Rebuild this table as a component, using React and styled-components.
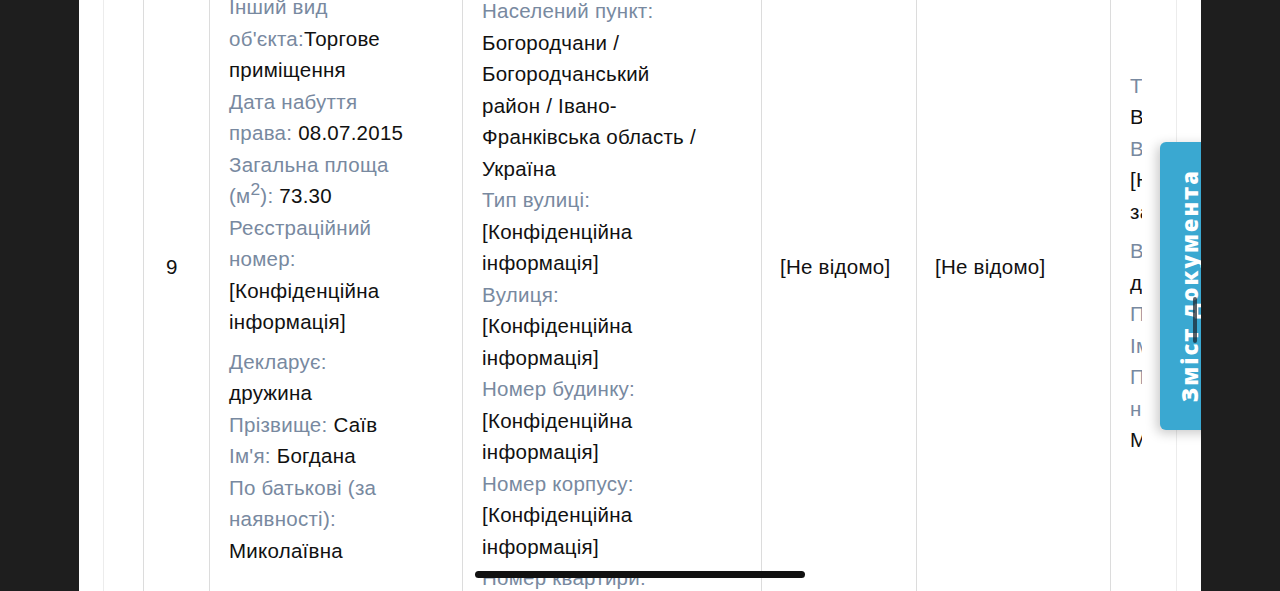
import React from 'react';
import styled, { createGlobalStyle } from 'styled-components';

const Global = createGlobalStyle`
  html, body { margin: 0; padding: 0; background: #1e1e1e; }
  body { font-family: "Liberation Sans", Arial, sans-serif; }
`;

const Screen = styled.div`
  display: flex;
  height: 591px;
  overflow: hidden;
  background: #1e1e1e;
`;

const Page = styled.main`
  position: relative;
  flex: 1;
  margin: 0 79px;
  padding: 0 24px;
  background: #fff;
  overflow: hidden;
`;

const Card = styled.section`
  margin-top: -141px;
  border: 1px solid #ececec;
  padding: 0 34px 0 39px;
`;

const TableClip = styled.div`
  overflow: hidden;
`;

const Table = styled.table`
  border-collapse: separate;
  border-spacing: 0;
  table-layout: fixed;
  width: 1268px;
  border-top: 1px solid #dcdcdc;
  font-size: 20.5px;
  line-height: 31.5px;
  letter-spacing: 0.25px;
  color: #111;
`;

const Col = styled.col`
  width: ${(p) => p.$w}px;
`;

const Cell = styled.td`
  vertical-align: middle;
  padding: 8px 18px 8px ${(p) => p.$pl ?? 18}px;
  border-right: 1px solid #dcdcdc;
  border-bottom: 1px solid #dcdcdc;
  &:first-child {
    border-left: 1px solid #dcdcdc;
  }
`;

const Block = styled.div`
  max-width: ${(p) => p.$w}px;
  margin-bottom: 8px;
`;

const Line = styled.div``;

const Label = styled.span`
  color: #7889a0;
  display: ${(p) => (p.$block ? 'block' : 'inline')};
`;

const Sup = styled.sup`
  font-size: 0.85em;
  line-height: 0;
  vertical-align: 0.45em;
`;

const Field = ({ label, children, stacked, tight }) => (
  <Line>
    <Label $block={stacked}>{label}</Label>
    {!stacked && !tight ? ' ' : null}
    {children}
  </Line>
);

const Tab = styled.div`
  position: absolute;
  top: 142px;
  right: -17px;
  width: 58px;
  height: 288px;
  display: flex;
  align-items: center;
  justify-content: center;
  background: #3aa8d1;
  border-radius: 6px 0 0 6px;
  box-shadow: -3px 3px 12px rgba(0, 0, 0, 0.22);
`;

const TabLabel = styled.span`
  writing-mode: vertical-rl;
  transform: rotate(180deg);
  color: #fff;
  font-family: "Open Sans", "DejaVu Sans", sans-serif;
  font-weight: 800;
  font-size: 22px;
  letter-spacing: 2px;
  line-height: 1;
`;

const HScrollIndicator = styled.div`
  position: absolute;
  left: 396px;
  top: 571px;
  width: 330px;
  height: 7px;
  border-radius: 4px;
  background: #111;
`;

const VScrollIndicator = styled.div`
  position: absolute;
  left: 1114px;
  top: 297px;
  width: 4px;
  height: 46px;
  border-radius: 2px;
  background: rgba(25, 35, 45, 0.72);
`;

const CONF = '[Конфіденційна інформація]';

export default function App() {
  return (
    <>
      <Global />
      <Screen>
        <Page>
          <Card>
            <TableClip>
              <Table>
                <colgroup>
                  <Col $w={67} />
                  <Col $w={253} />
                  <Col $w={299} />
                  <Col $w={155} />
                  <Col $w={194} />
                  <Col $w={300} />
                </colgroup>
                <tbody>
                  <tr>
                    <Cell $pl={22}>9</Cell>
                    <Cell $pl={19}>
                      <Block $w={182}>
                        <Field label="Тип об'єкта:">Інше</Field>
                        <Field label="Інший вид об'єкта:" tight>
                          Торгове приміщення
                        </Field>
                        <Field label="Дата набуття права:">08.07.2015</Field>
                        <Field
                          label={
                            <>
                              Загальна площа (м<Sup>2</Sup>):
                            </>
                          }
                        >
                          73.30
                        </Field>
                        <Field label="Реєстраційний номер:">{CONF}</Field>
                      </Block>
                      <Block $w={182}>
                        <Field label="Декларує:" stacked>
                          дружина
                        </Field>
                        <Field label="Прізвище:">Саїв</Field>
                        <Field label="Ім'я:">Богдана</Field>
                        <Field label="По батькові (за наявності):">Миколаївна</Field>
                      </Block>
                    </Cell>
                    <Cell $pl={19}>
                      <Block $w={224}>
                        <Field label="Країна:">Україна</Field>
                        <Field label="Поштовий індекс:">{CONF}</Field>
                        <Field label="Населений пункт:">
                          Богородчани / Богородчанський район / Івано-Франківська область / Україна
                        </Field>
                        <Field label="Тип вулиці:">{CONF}</Field>
                        <Field label="Вулиця:">{CONF}</Field>
                        <Field label="Номер будинку:">{CONF}</Field>
                        <Field label="Номер корпусу:">{CONF}</Field>
                        <Field label="Номер квартири:">{CONF}</Field>
                      </Block>
                    </Cell>
                    <Cell>[Не відомо]</Cell>
                    <Cell>[Не відомо]</Cell>
                    <Cell $pl={19}>
                      <Block $w={160}>
                        <Field label="Тип права:" stacked>
                          Власність
                        </Field>
                        <Field label="Відсоток:" stacked>
                          [Не застосовується]
                        </Field>
                      </Block>
                      <Block $w={160}>
                        <Field label="Власник:" stacked>
                          дружина
                        </Field>
                        <Field label="Прізвище:">Саїв</Field>
                        <Field label="Ім'я:">Богдана</Field>
                        <Field label="По батькові (за наявності):">Миколаївна</Field>
                      </Block>
                    </Cell>
                  </tr>
                </tbody>
              </Table>
            </TableClip>
          </Card>
          <Tab>
            <TabLabel>Зміст документа</TabLabel>
          </Tab>
          <VScrollIndicator />
          <HScrollIndicator />
        </Page>
      </Screen>
    </>
  );
}
